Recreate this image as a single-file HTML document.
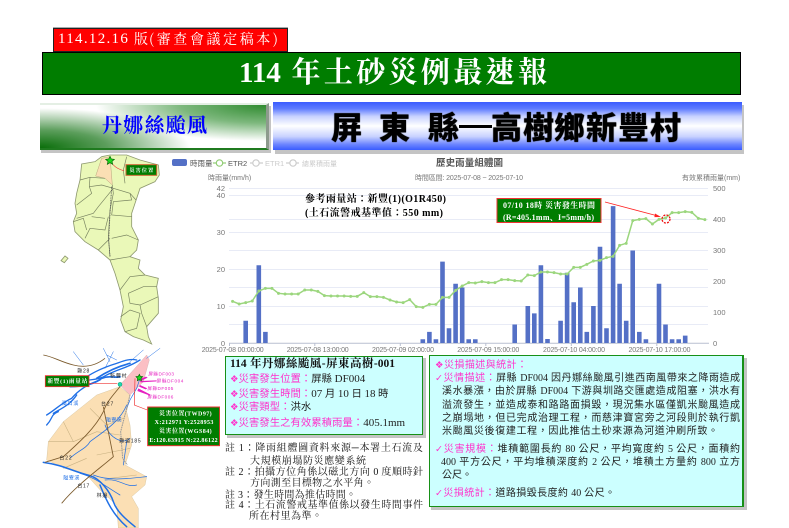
<!DOCTYPE html>
<html lang="zh-Hant"><head><meta charset="utf-8"><title>114 年土砂災例最速報</title>
<style>
html,body{margin:0;padding:0;background:#fff}
body{width:789px;height:528px;position:relative;overflow:hidden;font-family:"Liberation Serif","Noto Sans CJK TC",sans-serif}
.a{position:absolute;white-space:nowrap}
.l{position:absolute;white-space:nowrap;text-align:justify;text-align-last:justify;height:14px;line-height:14px;font-size:10px;color:#222}
.p{color:#f3c}
.n{position:absolute;white-space:nowrap;text-align:justify;text-align-last:justify;height:12px;line-height:12px;font-size:10px;color:#111;font-family:"Liberation Serif","Noto Serif CJK SC",serif}
.g{font-family:"DejaVu Sans",sans-serif;color:#f3c;font-size:9.5px}
.ptext{position:absolute;white-space:nowrap;font-size:10.4px;height:14px;line-height:14px;color:#222}
.ptext b{font-weight:400;font-size:11px}
.hc{position:absolute;top:107px;font:900 31px/38px "Noto Sans CJK TC",sans-serif;color:#000;text-shadow:0 0 1px #000}
svg text{font-family:"Liberation Sans","Noto Sans CJK TC",sans-serif}
svg text.s{font-family:"Liberation Serif","Noto Serif CJK SC",serif;font-weight:700}
</style></head><body>

<div class="a" style="left:53px;top:28px;width:233px;height:22px;background:#f00;border:1px solid #222;box-shadow:0 -1px 0 #aaa"></div>
<div class="a" style="left:58px;top:30px;height:19px;line-height:19px;font-family:'Liberation Serif',serif;font-size:15px;letter-spacing:1.3px;color:#fff">114.12.16</div>
<div class="a" style="left:134px;top:30px;height:19px;line-height:19px;font-family:'Noto Serif CJK SC',serif;font-size:14px;color:#fff">版</div>
<div class="a" style="left:149px;top:30px;width:129px;height:19px;line-height:19px;font-family:'Noto Serif CJK SC',serif;font-size:14px;color:#fff;text-align:justify;text-align-last:justify">(審查會議定稿本)</div>

<div class="a" style="left:42px;top:52px;width:697px;height:41px;background:#007d00;border:1px solid #000"></div>
<div class="a" style="left:239px;top:52px;width:308px;height:43px;line-height:43px;font-family:'Liberation Serif','Noto Serif CJK SC',serif;font-weight:700;font-size:29px;color:#fff;text-align:justify;text-align-last:justify">114 年土砂災例最速報</div>

<div class="a" style="left:41px;top:106px;width:230px;height:47px;background:#c4c4c4"></div>
<div class="a" style="left:40px;top:103px;width:229px;height:47px;box-sizing:border-box;background:radial-gradient(ellipse 150px 40px at 0% 100%,#0a6e0a 0%,#5c9e5c 45%,rgba(255,255,255,0) 100%),radial-gradient(ellipse 170px 36px at 100% 0%,#2f8b2f 0%,#7db87d 50%,rgba(255,255,255,0) 100%),#fff;border-right:3px solid #8d9a8d;border-bottom:2px solid #1f7a1f;border-top:2px solid #e4efe4"></div>
<div class="a" style="left:102px;top:112px;width:105px;height:28px;line-height:28px;font-family:'Liberation Serif','Noto Serif CJK SC',serif;font-weight:700;font-size:20px;color:#00f;text-align:justify;text-align-last:justify">丹娜絲颱風</div>

<div class="a" style="left:275px;top:105px;width:469px;height:49px;background:#c4c4c4"></div>
<div class="a" style="left:273px;top:102px;width:469px;height:48px;background:linear-gradient(#3a5cff 0%,#5f7cff 14%,#c8d2ff 30%,#fff 50%,#c8d2ff 72%,#6d86ff 88%,#3a5cff 100%)"></div>
<div class="hc" style="left:331px">屏</div><div class="hc" style="left:379px">東</div><div class="hc" style="left:428px">縣</div>
<div class="a" style="left:459px;top:125px;width:33px;height:3px;background:#000"></div>
<div class="hc" style="left:491px">高</div><div class="hc" style="left:523px">樹</div><div class="hc" style="left:554px">鄉</div><div class="hc" style="left:586px">新</div><div class="hc" style="left:618px">豐</div><div class="hc" style="left:650px">村</div>

<!-- chart -->
<svg class="a" style="left:0;top:0;filter:blur(.35px)" width="789" height="528" viewBox="0 0 789 528">
<g stroke="#e8ebf6" stroke-width="1">
<path d="M229 188.5H708M229 195.5H708M229 219.5H708M229 232.5H708M229 250.5H708M229 269.5H708M229 287.5H708M229 306.5H708M229 324.5H708"/>
</g>
<path d="M229 343.2H709" stroke="#b9bfd0" stroke-width="1"/>
<path d="M314.8 343v3M400.3 343v3M485.8 343v3M571.3 343v3M656.8 343v3M229.5 343v3" stroke="#b9bfd0"/>
<path fill="none" stroke="#5470c6" stroke-width="4.6" d="M245.7 343V320.8M258.8 343V265.3M265.4 343V331.9M422.8 343V339.3M429.4 343V331.9M435.9 343V339.3M442.5 343V261.6M449 343V328.2M455.6 343V283.8M462.2 343V287.5M468.7 343V339.3M475.3 343V339.3M514.7 343V324.5M527.8 343V306M534.3 343V313.4M540.9 343V265.3M547.5 343V339M560.6 343V320.8M567.1 343V272.7M573.7 343V302.3M580.3 343V287.5M586.8 343V331.9M593.4 343V306M600 343V246.8M606.5 343V328.2M613.1 343V206.1M619.6 343V283.8M626.2 343V320.8M632.7 343V250.5M639.3 343V331.9M645.9 343V339.3M659 343V283.8M665.5 343V324.5M672.1 343V339.3M678.7 343V339.3M685.2 343V335.6"/>
<g transform="translate(232.58,150) scale(6.56,.33333)">
<polyline fill="none" stroke="#9bd67d" stroke-width="1.5" vector-effect="non-scaling-stroke" points="0,454 1,462 2,458 3,453 4,423 5,415 6,415 7,430 8,432 9,432 10,432 11,420 12,420 13,424 14,437 15,438 16,438 17,438 18,439 19,439 20,428 21,440 22,440 23,442 24,450 25,456 26,458 27,449 28,470 29,472 30,463 31,463 32,442 33,442 34,421 35,408 36,398 37,399 38,395 39,398 40,398 41,389 42,389 43,392 44,393 45,375 46,377 47,366 48,366 49,368 50,372 51,372 52,352 53,352 54,343 55,333 56,331 57,323 58,319 59,286 60,280 61,212 62,208 63,206 64,222 65,208 66,204 67,188 68,188 69,185 70,187 71,205 72,209"/>
<path fill="none" stroke="#9bd67d" stroke-width="3" stroke-linecap="round" vector-effect="non-scaling-stroke" d="M0 454h.001M1 462h.001M2 458h.001M3 453h.001M4 423h.001M5 415h.001M6 415h.001M7 430h.001M8 432h.001M9 432h.001M10 432h.001M11 420h.001M12 420h.001M13 424h.001M14 437h.001M15 438h.001M16 438h.001M17 438h.001M18 439h.001M19 439h.001M20 428h.001M21 440h.001M22 440h.001M23 442h.001M24 450h.001M25 456h.001M26 458h.001M27 449h.001M28 470h.001M29 472h.001M30 463h.001M31 463h.001M32 442h.001M33 442h.001M34 421h.001M35 408h.001M36 398h.001M37 399h.001M38 395h.001M39 398h.001M40 398h.001M41 389h.001M42 389h.001M43 392h.001M44 393h.001M45 375h.001M46 377h.001M47 366h.001M48 366h.001M49 368h.001M50 372h.001M51 372h.001M52 352h.001M53 352h.001M54 343h.001M55 333h.001M56 331h.001M57 323h.001M58 319h.001M59 286h.001M60 280h.001M61 212h.001M62 208h.001M63 206h.001M64 222h.001M65 208h.001M66 204h.001M67 188h.001M68 188h.001M69 185h.001M70 187h.001M71 205h.001M72 209h.001"/>
</g>
<g font-size="7.5" fill="#777">
<text x="225" y="191" text-anchor="end">42</text><text x="225" y="198" text-anchor="end">40</text><text x="225" y="235" text-anchor="end">30</text><text x="225" y="272" text-anchor="end">20</text><text x="225" y="309" text-anchor="end">10</text><text x="225" y="346" text-anchor="end">0</text>
<text x="713" y="191">500</text><text x="713" y="222">400</text><text x="713" y="253">300</text><text x="713" y="284">200</text><text x="713" y="315">100</text><text x="713" y="346">0</text>
<text x="208" y="180" font-size="7">時雨量(mm/h)</text>
<text x="415" y="180" font-size="7" textLength="108">時間區間: 2025-07-08 ~ 2025-07-10</text>
<text x="682" y="180" font-size="7">有效累積雨量(mm)</text>
<text x="201.7" y="352" font-size="7" textLength="62">2025-07-08 00:00:00</text>
<text x="286.7" y="352" font-size="7" textLength="62">2025-07-08 13:00:00</text>
<text x="372" y="352" font-size="7" textLength="62">2025-07-09 02:00:00</text>
<text x="457.3" y="352" font-size="7" textLength="62">2025-07-09 15:00:00</text>
<text x="543" y="352" font-size="7" textLength="62">2025-07-10 04:00:00</text>
<text x="628.5" y="352" font-size="7" textLength="62">2025-07-10 17:00:00</text>
</g>
<rect x="172" y="159" width="15" height="7" rx="2" fill="#5470c6"/>
<text x="190" y="166" font-size="7.5" fill="#555">時雨量</text>
<path d="M213 163h13" stroke="#91cc75" stroke-width="1.2"/><circle cx="219.5" cy="163" r="3.2" fill="#fff" stroke="#91cc75" stroke-width="1.2"/>
<text x="228" y="166" font-size="7.5" fill="#555">ETR2</text>
<path d="M250 163h13" stroke="#ccc" stroke-width="1.2"/><circle cx="256" cy="163" r="3.2" fill="#fff" stroke="#ccc" stroke-width="1.2"/>
<text x="265" y="166" font-size="7.5" fill="#ccc">ETR1</text>
<path d="M286 163h13" stroke="#ccc" stroke-width="1.2"/><circle cx="293" cy="163" r="3.2" fill="#fff" stroke="#ccc" stroke-width="1.2"/>
<text x="302" y="166" font-size="7" fill="#ccc">總累積雨量</text>
<text x="436" y="166" font-size="9.5" font-weight="700" fill="#555" textLength="67">歷史雨量組體圖</text>
</svg>

<svg class="a" style="left:0;top:0" width="789" height="528" viewBox="0 0 789 528">
<text class="s" x="305" y="202" font-size="10" fill="#000" textLength="141">參考雨量站&#xFF1A;新豐(1)(O1R450)</text>
<text class="s" x="305" y="216" font-size="10" fill="#000" textLength="138">(土石流警戒基準值&#xFF1A;550 mm)</text>
<rect x="497" y="198.5" width="104" height="24" fill="#007d00" stroke="#e33" stroke-width="1"/>
<text class="s" x="503" y="208" font-size="8" fill="#fff" textLength="92">07/10 18時  災害發生時間</text>
<text class="s" x="503" y="220" font-size="8" fill="#fff" textLength="91">(R=405.1mm、I=5mm/h)</text>
<path d="M605 202L658 216" stroke="#f22" stroke-width=".8" fill="none"/><path d="M661 217l-6-3.5-.6 3.6z" fill="#f22"/>
<circle cx="666" cy="219" r="4" fill="none" stroke="#e11" stroke-width="1.3" stroke-dasharray="2 1.2"/>
</svg>

<!-- map 1 -->
<svg class="a" style="left:30px;top:150px;filter:blur(.3px)" width="180" height="200" viewBox="0 0 540 600">
<path d="M240 15L290 15L330 30L385 45L388 75L375 95L330 115L315 160L305 190L305 230L325 270L320 300L300 320L330 330L325 355L345 375L385 385L380 410L385 445L385 490L350 530L355 560L365 582L340 570L310 560L285 545L272 510L280 470L270 420L255 370L240 330L205 300L165 275L135 245L130 215L140 190L135 160L140 130L150 90L155 42L195 35L215 20Z" fill="#eaf8b8" stroke="#8f9a70" stroke-width="2.5"/>
<path d="M215 25L240 20L247 105L225 85L197 78Z" fill="#fbdfb4" stroke="#b9a67c" stroke-width="1.5"/>
<path d="M93 332L105 318L114 325L103 338Z" fill="#eaf8b8" stroke="#8f9a70" stroke-width="2.5"/>
<g fill="none" stroke="#77825f" stroke-width="2">
<path d="M247 105L250 130L240 180L235 260L240 320M150 90L180 82L225 85M180 82L178 110L185 130L140 165M178 110L215 105L250 115L300 130L318 150M250 115L205 170L190 190L140 205M300 130L305 150L250 155L245 195L305 200M245 265L290 255L325 270M235 200L225 240L180 235L165 265M185 200L225 205M130 215L160 205L170 240M205 300L240 265M285 100L280 60L290 20M240 330L300 320M270 420L300 380L345 375M295 430L340 410L380 410M295 430L300 460L330 465L385 440M272 500L300 480L330 490L320 535L285 545M330 465L335 490L350 530"/>
</g>
<path d="M245 110L240 190L236 270L240 320" fill="none" stroke="#555" stroke-width="2.5" stroke-dasharray="3 2"/>
<path d="M248 43Q262 58 282 62" fill="none" stroke="#e33" stroke-width="2"/>
<rect x="288" y="44" width="92" height="32" fill="#007d00" stroke="#c63" stroke-width="3"/>
<text class="s" x="298" y="66" font-size="16" fill="#fff" textLength="72">災害位置</text>
<path d="M240 19l4 8 9 1-7 6 2 9-8-5-8 5 2-9-7-6 9-1z" fill="#1ed81e" stroke="#060" stroke-width="2"/>
</svg>

<!-- map 2 -->
<svg class="a" style="left:30px;top:345px;filter:blur(.3px)" width="190" height="183" viewBox="0 0 570 549">
<path d="M270 125L300 150L290 200L300 240L305 300L285 360L350 395L345 420L305 455L325 490L325 549L265 549L260 480L215 440L170 390L105 370L50 345L55 290L100 230L150 190L200 150Z" fill="#fbdfb4" stroke="#c9b68c"/>
<path d="M270 120L350 30L358 45L340 110L320 130L300 150Z" fill="#fbbfc4" stroke="#c9a6a6"/>
<g fill="none" stroke="#c9b283" stroke-width="1.8"><path d="M100 230L130 290L55 290M130 290L200 260L270 270M180 190L230 240L280 220M200 330L300 310M100 370L170 340M240 400L320 390"/></g>
<g fill="none" stroke="#1f6fe6" stroke-linecap="round">
<path stroke-width="4" d="M130 115C170 100 200 110 230 90C270 70 290 70 330 45M150 108C180 88 210 70 260 55C280 48 300 40 320 45"/>
<path stroke-width="5" d="M120 125C150 125 190 120 215 100C240 90 250 100 270 95M200 100C230 80 260 65 300 55"/>
<path stroke-width="4" d="M50 210C75 195 100 170 125 160C150 130 180 115 210 105M50 240C70 220 60 210 85 200M70 205C95 190 120 180 140 150"/>
<path stroke-width="1.5" d="M220 10L240 50M250 20L225 70M340 15L300 50M130 20L160 60M390 10L350 40M230 30L260 45"/>
<path stroke-width="4.5" d="M40 352C100 360 130 380 180 392C210 400 240 440 250 470C260 500 290 525 315 545M210 420C230 470 250 510 290 545"/>
<path stroke-width="2.2" d="M190 390C240 410 300 400 350 395M225 405C270 400 290 430 320 420M150 385C200 400 220 420 270 450"/>
<path stroke-width="2.2" d="M290 180C270 230 220 260 180 290C170 310 140 320 120 340M225 240C240 280 280 300 300 280M290 290L280 360"/>
<path stroke-width="2" d="M330 100L320 130L300 165L290 190"/>
</g>
<path fill="none" stroke="#999" stroke-width="3" stroke-dasharray="5 2" d="M300 150L290 190L272 260L278 340L292 360"/>
<g fill="none" stroke="#7b5a2c" stroke-width="2.6">
<path d="M40 30C70 35 90 50 130 60C170 70 200 60 225 40"/>
<path d="M270 125C250 150 230 170 220 200C195 250 150 290 100 335L45 352"/>
<path d="M220 185L250 335C210 370 140 420 95 475"/>
</g>
<g fill="#e61fc0"><path d="M328 103l20-8 5 3-18 9zM330 108l50-2v3l-48 3zM330 120l22 10-5 3-20-8zM325 130l35 18v4l-38-14z"/></g>
<path d="M178 115H262M315 100L313 180L352 195" fill="none" stroke="#e33" stroke-width="2"/>
<circle cx="270" cy="118" r="6" fill="#1ed8b0" stroke="#097" stroke-width="1.5"/>
<path d="M328 88l3 6 7 1-5 5 1 7-6-3-6 3 1-7-5-5 7-1z" fill="#1ed81e" stroke="#060" stroke-width="2"/>
<g font-size="15" fill="#222">
<text x="142" y="82" textLength="36">縣28</text>
<text x="240" y="98" textLength="50">新豐村</text>
<text x="213" y="181" textLength="37">台27</text>
<text x="268" y="293" textLength="64">縣道185</text>
<text x="88" y="343" textLength="37">台22</text>
<text x="142" y="428" textLength="36">台17</text>
<text x="200" y="456" textLength="32">林邊</text>
</g>
<g font-size="15" fill="#1f6fe6">
<text x="95" y="180" textLength="50">濁口溪</text>
<text x="228" y="229" textLength="47">隘寮溪</text>
<text x="100" y="403" textLength="48">隘寮溪</text>
</g>
<g font-size="14" fill="#e61fc0">
<text x="355" y="92" textLength="77">屏縣DF003</text>
<text x="380" y="113" textLength="80">屏縣DF004</text>
<text x="352" y="135" textLength="78">屏縣DF005</text>
<text x="352" y="161" textLength="78">屏縣DF006</text>
</g>
<rect x="46" y="92" width="131" height="33" fill="#007d00" stroke="#e33" stroke-width="2.5"/>
<text class="s" x="52" y="114" font-size="17" fill="#fff" textLength="120">新豐(1)雨量站</text>
<rect x="353" y="186" width="216" height="116" fill="#007d00" stroke="#e33" stroke-width="3"/>
<text class="s" x="387" y="211" font-size="18" fill="#fff" textLength="158">災害位置(TWD97)</text>
<text class="s" x="374" y="237" font-size="18" fill="#fff" textLength="176">X:212971 Y:2528953</text>
<text class="s" x="387" y="264" font-size="18" fill="#fff" textLength="158">災害位置(WGS84)</text>
<text class="s" x="358" y="291" font-size="18" fill="#fff" textLength="205">E:120.63915 N:22.86122</text>
</svg>

<!-- left panel -->
<div class="a" style="left:227px;top:358px;width:199px;height:80px;background:#c4c4c4"></div>
<div class="a" style="left:225px;top:356px;width:196px;height:77px;background:#ccffff;border:1px solid #179017"></div>
<div class="a" style="left:230px;top:357px;width:165px;height:14px;line-height:14px;font-weight:700;font-size:11.5px;color:#111;font-family:'Liberation Serif','Noto Serif CJK SC',serif;text-align:justify;text-align-last:justify">114 年丹娜絲颱風-屏東高樹-001</div>
<div class="ptext" style="left:230px;top:372px"><span class="g">❖</span><span class="p">災害發生位置&#xFF1A;</span>屏縣 <b>DF004</b></div>
<div class="ptext" style="left:230px;top:387px"><span class="g">❖</span><span class="p">災害發生時間&#xFF1A;</span><b>07</b> 月 <b>10</b> 日 <b>18</b> 時</div>
<div class="ptext" style="left:230px;top:401px"><span class="g">❖</span><span class="p">災害類型&#xFF1A;</span>洪水</div>
<div class="ptext" style="left:230px;top:416px"><span class="g">❖</span><span class="p">災害發生之有效累積雨量&#xFF1A;</span><b>405.1mm</b></div>

<!-- notes -->
<div class="n" style="left:225px;top:443px;width:198px">註 1&#xFF1A;降雨組體圖資料來源─本署土石流及</div>
<div class="n" style="left:250px;top:456px;width:116px">大規模崩塌防災應變系統</div>
<div class="n" style="left:225px;top:467px;width:198px">註 2&#xFF1A;拍攝方位角係以磁北方向 0 度順時針</div>
<div class="n" style="left:250px;top:478px;width:124px">方向測至目標物之水平角。</div>
<div class="n" style="left:225px;top:490px;width:131px">註 3&#xFF1A;發生時間為推估時間。</div>
<div class="n" style="left:225px;top:500px;width:198px">註 4&#xFF1A;土石流警戒基準值係以發生時間事件</div>
<div class="n" style="left:249px;top:511px;width:73px">所在村里為準。</div>

<!-- right panel -->
<div class="a" style="left:431px;top:358px;width:316px;height:152px;background:#c4c4c4"></div>
<div class="a" style="left:429px;top:355px;width:312px;height:150px;background:#ccffff;border:1px solid #179017;border-right-width:2px;border-bottom-width:1px"></div>
<div class="l" style="left:435px;top:359px;width:92px"><span class="g">❖</span><span class="p">災損描述與統計&#xFF1A;</span></div>
<div class="l" style="left:435px;top:372px;width:305px"><span class="g">✓</span><span class="p">災情描述&#xFF1A;</span>屏縣 DF004 因丹娜絲颱風引進西南風帶來之降雨造成</div>
<div class="l" style="left:442px;top:385px;width:298px">溪水暴漲&#xFF0C;由於屏縣 DF004 下游與圳路交匯處造成阻塞&#xFF0C;洪水有</div>
<div class="l" style="left:442px;top:399px;width:298px">溢流發生&#xFF0C;並造成泰和路路面損毀&#xFF0C;現況集水區僅凱米颱風造成</div>
<div class="l" style="left:442px;top:412px;width:298px">之崩塌地&#xFF0C;但已完成治理工程&#xFF0C;而慈津寶宮旁之河段則於執行凱</div>
<div class="l" style="left:442px;top:425px;width:276px">米颱風災後復建工程&#xFF0C;因此推估土砂來源為河道沖刷所致。</div>
<div class="l" style="left:435px;top:443px;width:305px"><span class="g">✓</span><span class="p">災害規模&#xFF1A;</span>堆積範圍長約 80 公尺&#xFF0C;平均寬度約 5 公尺&#xFF0C;面積約</div>
<div class="l" style="left:441px;top:456px;width:299px">400 平方公尺&#xFF0C;平均堆積深度約 2 公尺&#xFF0C;堆積土方量約 800 立方</div>
<div class="l" style="left:442px;top:469px;width:29px">公尺。</div>
<div class="l" style="left:435px;top:487px;width:180px"><span class="g">✓</span><span class="p">災損統計&#xFF1A;</span>道路損毀長度約 40 公尺。</div>

</body></html>
